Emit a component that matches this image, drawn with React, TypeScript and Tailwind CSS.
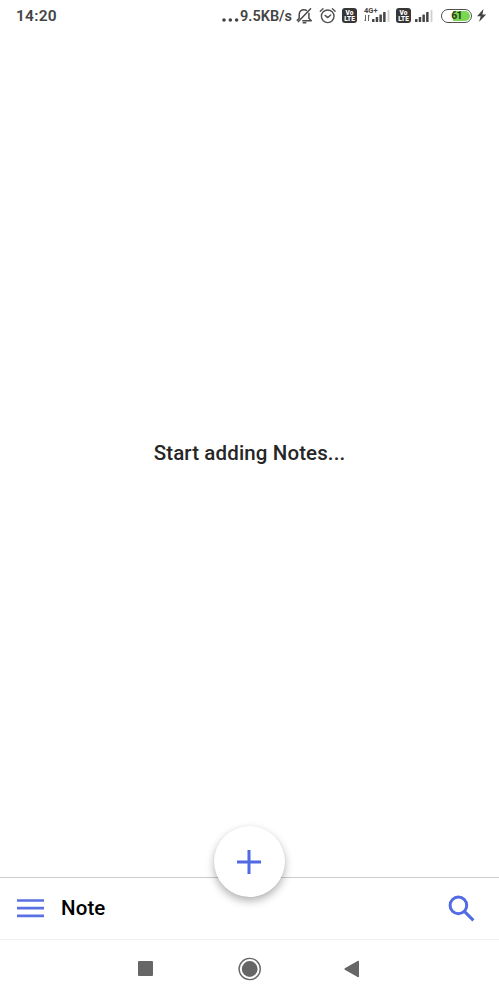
import React from 'react';

function BellOff() {
  return (
    <svg className="ml-[3px] h-[18px] w-[18px] shrink-0" viewBox="0 0 18 18" fill="none" stroke="#4a4a4a" strokeWidth="1.5" strokeLinecap="round" strokeLinejoin="round">
      <path d="M3.2 9.8V7.4C3.2 4.6 5.1 2.8 8 2.8c1 0 1.8.2 2.5.6M12.9 6.3v5l2.4 2.4H6.8M3.2 9.8v1.4L1.2 13.2" />
      <path d="M14.6 1.8 2.4 14.6M7.2 15.7h2.6" />
    </svg>
  );
}

function Alarm() {
  return (
    <svg className="ml-[5px] h-[18px] w-[18px] shrink-0" viewBox="0 0 18 18" fill="none" stroke="#505050" strokeWidth="1.4" strokeLinecap="round" strokeLinejoin="round">
      <circle cx="8.7" cy="9.3" r="6.3" />
      <path d="M1.3 4.3 4 1.8M16.1 4.3 13.4 1.8M6.1 8.4 8.7 10.6l3-2.6" />
    </svg>
  );
}

function Volte({ className }: { className: string }) {
  return (
    <div className={`flex h-[15px] w-[15px] shrink-0 items-center justify-center rounded-[3px] bg-[#363636] text-center text-[6.5px] leading-[6px] font-black whitespace-pre text-white ${className}`}>
      {'Vo\nLTE'}
    </div>
  );
}

function Signal({ className }: { className: string }) {
  return (
    <svg className={`h-[12px] w-[18px] shrink-0 ${className}`} viewBox="0 0 18 12" fill="#454545">
      <rect x="0" y="9" width="2.5" height="3" rx=".5" />
      <rect x="3.7" y="7" width="2.5" height="5" rx=".5" />
      <rect x="7.4" y="4.5" width="2.5" height="7.5" rx=".5" />
      <rect x="11.1" y="2" width="2.5" height="10" rx=".5" />
      <rect x="15.6" y="0" width="1.8" height="12" rx=".5" fill="#d0d0d0" />
    </svg>
  );
}

function StatusBar() {
  return (
    <header className="flex h-8 shrink-0 items-center pr-[12px] pl-[16px] text-[#444]">
      <span className="text-[15.5px] leading-8 font-semibold tracking-[0.25px]">14:20</span>
      <svg className="mt-[8px] ml-auto h-[4px] w-[18px]" viewBox="0 0 18 4" fill="#444">
        <circle cx="2" cy="2" r="1.8" />
        <circle cx="8.3" cy="2" r="1.8" />
        <circle cx="14.6" cy="2" r="1.8" />
      </svg>
      <span className="mt-px w-[53px] text-[14.5px] leading-8 font-semibold whitespace-nowrap">9.5KB/s</span>
      <div className="-mt-px flex">
        <BellOff />
        <Alarm />
      </div>
      <Volte className="-mt-px ml-[5px]" />
      <div className="ml-[7px] flex h-[16px] w-[27px] shrink-0 flex-col">
        <span className="h-[5px] text-[7.5px] leading-[6px] font-bold">4G+</span>
        <div className="-mt-[3px] flex">
          <svg className="mt-[4px] h-[8px] w-[6px]" viewBox="0 0 6 8" fill="none" stroke="#555" strokeWidth=".9">
            <path d="M1.5 1v6M.3 5.7 1.5 7M4.5 7V1M4.5 1l1.2 1.3" />
          </svg>
          <Signal className="ml-[2px]" />
        </div>
      </div>
      <Volte className="-mt-px ml-[5px]" />
      <Signal className="-mt-px ml-[4px]" />
      <div className="-mt-px ml-[8px] flex h-[14px] w-[31px] shrink-0 rounded-full border-[1.5px] border-[#505050] p-[1px]">
        <div className="flex h-full w-full items-center justify-center rounded-full bg-[linear-gradient(90deg,white_38%,#7bd650_38%)] pt-[2px] text-[10.5px] leading-none font-bold tracking-[-0.7px] text-[#263c20]">61</div>
      </div>
      <svg className="-mt-px ml-[4px] h-[13px] w-[11px] shrink-0" viewBox="0 0 11 13" fill="#444">
        <path d="M7.5 0 1 7.3h3.7L3 13l7.2-7.6H6.4z" />
      </svg>
    </header>
  );
}

export default function App() {
  return (
    <div className="flex h-[999px] w-[499px] flex-col overflow-hidden bg-white font-['Roboto','Liberation_Sans',sans-serif]">
      <StatusBar />
      <main className="flex flex-1 items-center justify-center pb-[3px] text-[20.5px] font-medium text-[#262626]">
        <p className="tracking-[0.12px]">Start adding Notes...</p>
      </main>
      <nav className="relative flex h-[62px] shrink-0 items-center border-t border-[#cbcbcb] pr-[24px] pb-px pl-[17px]">
        <svg className="h-[20px] w-[27px]" viewBox="0 0 27 20" stroke="#5a70e3" strokeWidth="2.7">
          <path d="M0 2.5h27M0 10.2h27M0 17.8h27" />
        </svg>
        <h1 className="ml-[17px] text-[20.5px] font-medium tracking-[0.1px] text-black">Note</h1>
        <svg className="ml-auto h-[27px] w-[27px]" viewBox="0 0 27 27" fill="none" stroke="#526be3" strokeWidth="3">
          <circle cx="10.4" cy="10.4" r="8.3" />
          <path d="m16.4 16.4 9 9" />
        </svg>
        <button className="absolute top-[-52px] left-[214px] flex h-[71px] w-[71px] items-center justify-center rounded-full bg-white pr-px shadow-[0_4px_8px_rgba(0,0,0,0.3),0_0_2px_rgba(0,0,0,0.06)]" aria-label="Add note">
          <svg className="h-[24px] w-[24px]" viewBox="0 0 24 24" stroke="#5069e4" strokeWidth="3">
            <path d="M12 0v24M0 12h24" />
          </svg>
        </button>
      </nav>
      <footer className="grid h-[60px] shrink-0 grid-cols-[103px_103px_103px] items-center justify-center justify-items-center border-t border-[#f1f1f1] pr-px pb-[2px]">
        <div className="mr-px h-[15px] w-[15px] rounded-[1px] bg-[#666]" />
        <svg className="h-[24px] w-[24px]" viewBox="0 0 24 24">
          <circle cx="12.7" cy="12" r="10.6" fill="none" stroke="#666" strokeWidth="1.4" />
          <circle cx="12.7" cy="12" r="7.9" fill="#666" />
        </svg>
        <svg className="-ml-px h-[18px] w-[16px]" viewBox="0 0 16 18" fill="#666">
          <path d="M.8 8.2 14 .8Q15 .3 15 1.4v15.2q0 1.1-1 .6L.8 9.8Q0 9 .8 8.2Z" />
        </svg>
      </footer>
    </div>
  );
}
